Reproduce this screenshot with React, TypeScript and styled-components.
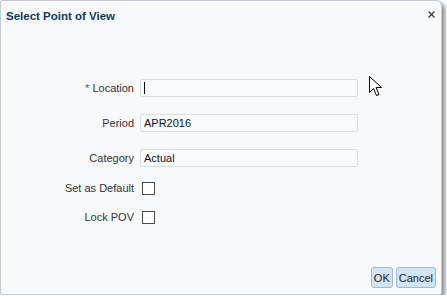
import React from 'react';
import styled, { createGlobalStyle } from 'styled-components';

const Global = createGlobalStyle`
  html, body { margin: 0; padding: 0; background: #ffffff; }
  body { font-family: "Liberation Sans", Arial, sans-serif; }
`;

export default function App() {
  return (
    <>
      <Global />
      <Dialog>
        <Header>
          <Title>Select Point of View</Title>
          <Close aria-label="close">
            <svg width="7" height="7" viewBox="0 0 7 7">
              <path d="M0.5 0.5 L6.5 6.5 M6.5 0.5 L0.5 6.5" stroke="#333333" strokeWidth="1.2" />
            </svg>
          </Close>
        </Header>
        <Form>
          <Row $top={48}>
            <Label><Star>*</Star> Location</Label>
            <Input><Caret /></Input>
          </Row>
          <Row $top={17}>
            <Label>Period</Label>
            <Input>APR2016</Input>
          </Row>
          <Row $top={17}>
            <Label>Category</Label>
            <Input>Actual</Input>
          </Row>
          <Row $top={12}>
            <Label>Set as Default</Label>
            <Check />
          </Row>
          <Row $top={11}>
            <Label>Lock POV</Label>
            <Check />
          </Row>
        </Form>
        <Footer>
          <Button>OK</Button>
          <Button>Cancel</Button>
        </Footer>
        <Pointer width="15" height="21" viewBox="0 0 15 21">
          <path
            d="M0.5 0.5 L0.5 16.5 L4.5 12.5 L7.5 19.5 L10 18.5 L7 11.5 L12.5 11.5 Z"
            fill="#ffffff"
            stroke="#000000"
            strokeWidth="1"
          />
        </Pointer>
      </Dialog>
    </>
  );
}

const Dialog = styled.div`
  position: relative;
  box-sizing: border-box;
  width: 442px;
  height: 295px;
  display: flex;
  flex-direction: column;
  background: #f8f9fa;
  border: 1px solid #c3ccd6;
  border-radius: 2px 6px 2px 2px;
  box-shadow: 3px 3px 4px rgba(0, 0, 0, 0.45);
`;

const Header = styled.div`
  height: 30px;
  display: flex;
  align-items: center;
  justify-content: space-between;
  padding: 0 6px 0 5px;
`;

const Title = styled.div`
  font-size: 11.5px;
  font-weight: bold;
  color: #0e3a5c;
`;

const Close = styled.div`
  display: flex;
  margin-top: -4px;
`;

const Form = styled.div`
  display: flex;
  flex-direction: column;
  flex: 1;
`;

const Row = styled.div<{ $top: number }>`
  display: grid;
  grid-template-columns: 133px 218px;
  column-gap: 6px;
  align-items: center;
  height: 18px;
  margin-top: ${p => p.$top}px;
`;

const Label = styled.div`
  text-align: right;
  font-size: 11px;
  color: #333333;
  white-space: nowrap;
`;

const Star = styled.span`
  color: #2467a6;
`;

const Input = styled.div`
  box-sizing: border-box;
  height: 18px;
  display: flex;
  align-items: center;
  padding-left: 3px;
  font-size: 11px;
  color: #111111;
  background: #f7fbfe;
  border: 1px solid #d9dfe6;
  border-radius: 2px;
`;

const Caret = styled.span`
  display: block;
  width: 1px;
  height: 12px;
  background: #000000;
`;

const Check = styled.div`
  box-sizing: border-box;
  width: 13px;
  height: 13px;
  margin-left: 2px;
  background: #ffffff;
  border: 1px solid #4a4a4a;
`;

const Footer = styled.div`
  display: flex;
  justify-content: flex-end;
  gap: 3px;
  padding: 0 5px 6px 0;
`;

const Button = styled.div`
  box-sizing: border-box;
  height: 21px;
  padding: 0 2px;
  display: flex;
  align-items: center;
  font-size: 11px;
  color: #1c1c1c;
  background: #d3e5f5;
  border: 1px solid #9dbad6;
  border-radius: 3px;
`;

const Pointer = styled.svg`
  position: absolute;
  left: 368px;
  top: 75px;
`;
